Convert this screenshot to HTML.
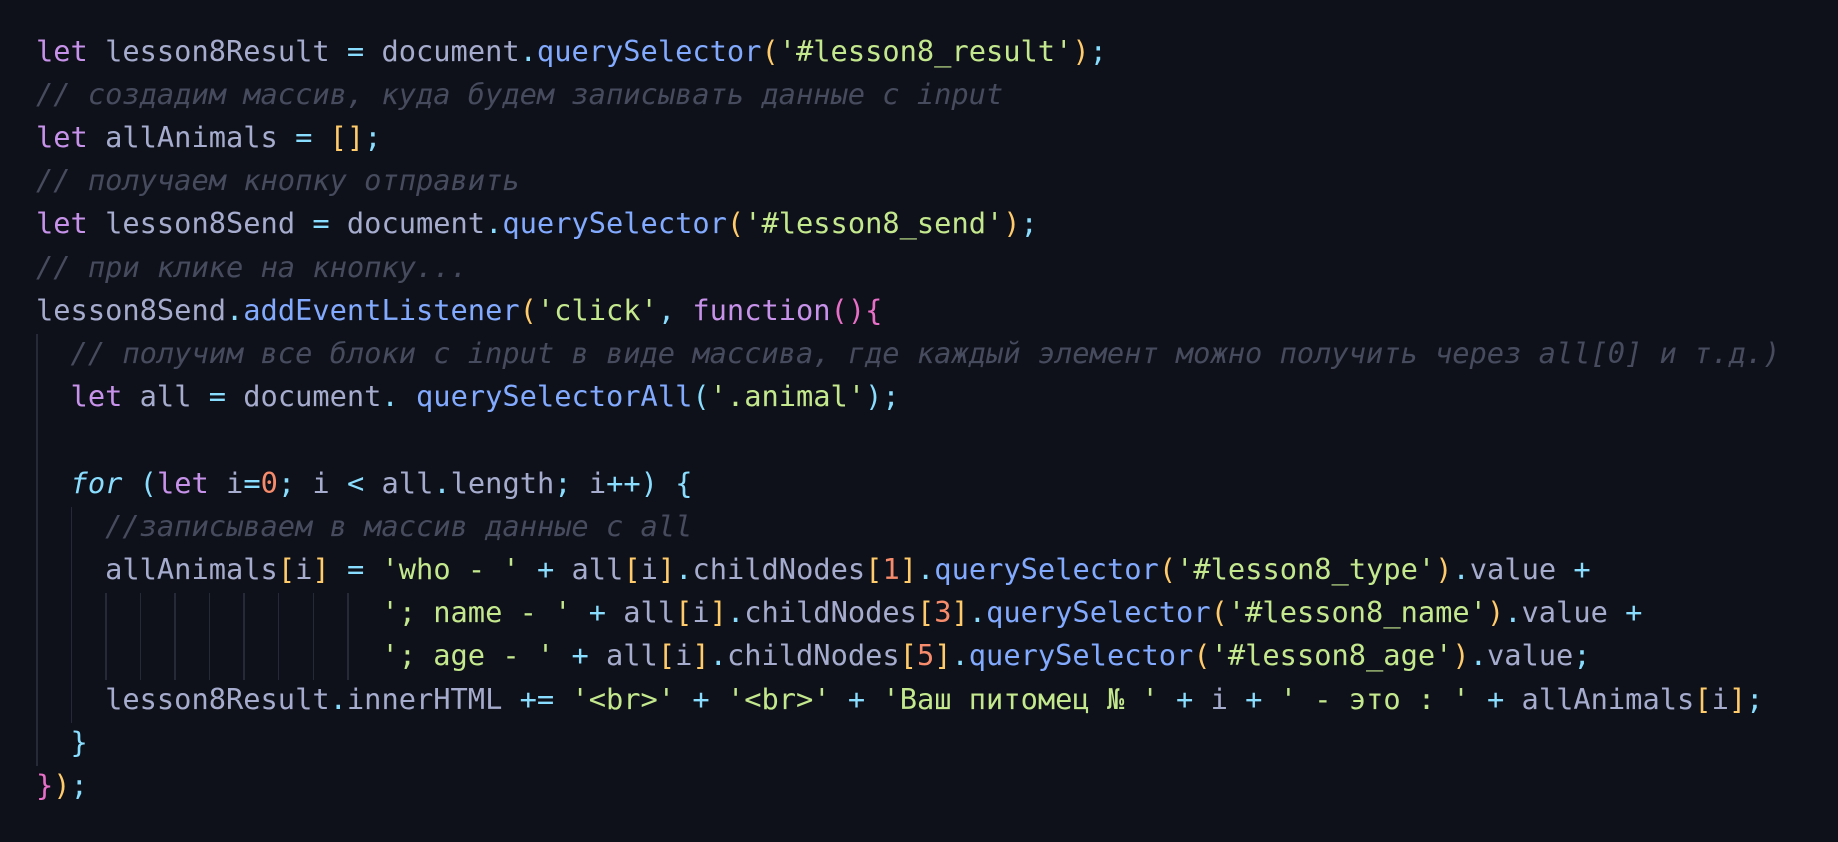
<!DOCTYPE html>
<html><head><meta charset="utf-8"><style>
html,body{margin:0;padding:0;background:#0f111a;width:1838px;height:842px;overflow:hidden}
.l{position:absolute;left:36px;margin-top:-2.2px;height:43.2px;line-height:43.2px;white-space:pre;font-family:"DejaVu Sans Mono","Liberation Mono",monospace;font-size:28.7px;color:#a6accd}
.k{color:#c792ea}.o{color:#89ddff}.m{color:#82aaff}.s{color:#c3e88d}.y{color:#ffcb6b}.n{color:#f78c6c}
.c{color:#464b5d;font-style:italic}.f{color:#89ddff;font-style:italic}.pk{color:#e86fc7}
.g{position:absolute;width:1.5px;background:#262a38}
</style></head><body>
<div class="g" style="left:36px;top:334.1px;height:432px"></div>
<div class="g" style="left:70.6px;top:507px;height:216px"></div>
<div class="g" style="left:105.1px;top:593.4px;height:86.4px"></div>
<div class="g" style="left:139.7px;top:593.4px;height:86.4px"></div>
<div class="g" style="left:174.2px;top:593.4px;height:86.4px"></div>
<div class="g" style="left:208.8px;top:593.4px;height:86.4px"></div>
<div class="g" style="left:243.4px;top:593.4px;height:86.4px"></div>
<div class="g" style="left:277.9px;top:593.4px;height:86.4px"></div>
<div class="g" style="left:312.5px;top:593.4px;height:86.4px"></div>
<div class="g" style="left:347px;top:593.4px;height:86.4px"></div>

<div class="l" style="top:31.7px"><span class="k">let</span> lesson8Result <span class="o">=</span> document<span class="o">.</span><span class="m">querySelector</span><span class="y">(</span><span class="s">'#lesson8_result'</span><span class="y">)</span><span class="o">;</span></div>
<div class="l" style="top:74.9px"><span class="c">// создадим массив, куда будем записывать данные с input</span></div>
<div class="l" style="top:118.1px"><span class="k">let</span> allAnimals <span class="o">=</span> <span class="y">[]</span><span class="o">;</span></div>
<div class="l" style="top:161.3px"><span class="c">// получаем кнопку отправить</span></div>
<div class="l" style="top:204.5px"><span class="k">let</span> lesson8Send <span class="o">=</span> document<span class="o">.</span><span class="m">querySelector</span><span class="y">(</span><span class="s">'#lesson8_send'</span><span class="y">)</span><span class="o">;</span></div>
<div class="l" style="top:247.7px"><span class="c">// при клике на кнопку...</span></div>
<div class="l" style="top:290.9px">lesson8Send<span class="o">.</span><span class="m">addEventListener</span><span class="y">(</span><span class="s">'click'</span><span class="o">,</span> <span class="k">function</span><span class="pk">(){</span></div>
<div class="l" style="top:334.1px">  <span class="c">// получим все блоки с input в виде массива, где каждый элемент можно получить через all[0] и т.д.)</span></div>
<div class="l" style="top:377.3px">  <span class="k">let</span> all <span class="o">=</span> document<span class="o">.</span> <span class="m">querySelectorAll</span><span class="o">(</span><span class="s">'.animal'</span><span class="o">);</span></div>
<div class="l" style="top:463.7px">  <span class="f">for</span> <span class="o">(</span><span class="k">let</span> i<span class="o">=</span><span class="n">0</span><span class="o">;</span> i <span class="o">&lt;</span> all<span class="o">.</span>length<span class="o">;</span> i<span class="o">++)</span> <span class="o">{</span></div>
<div class="l" style="top:506.9px">    <span class="c">//записываем в массив данные с all</span></div>
<div class="l" style="top:550.1px">    allAnimals<span class="y">[</span>i<span class="y">]</span> <span class="o">=</span> <span class="s">'who - '</span> <span class="o">+</span> all<span class="y">[</span>i<span class="y">]</span><span class="o">.</span>childNodes<span class="y">[</span><span class="n">1</span><span class="y">]</span><span class="o">.</span><span class="m">querySelector</span><span class="y">(</span><span class="s">'#lesson8_type'</span><span class="y">)</span><span class="o">.</span>value <span class="o">+</span></div>
<div class="l" style="top:593.3px">                    <span class="s">'; name - '</span> <span class="o">+</span> all<span class="y">[</span>i<span class="y">]</span><span class="o">.</span>childNodes<span class="y">[</span><span class="n">3</span><span class="y">]</span><span class="o">.</span><span class="m">querySelector</span><span class="y">(</span><span class="s">'#lesson8_name'</span><span class="y">)</span><span class="o">.</span>value <span class="o">+</span></div>
<div class="l" style="top:636.5px">                    <span class="s">'; age - '</span> <span class="o">+</span> all<span class="y">[</span>i<span class="y">]</span><span class="o">.</span>childNodes<span class="y">[</span><span class="n">5</span><span class="y">]</span><span class="o">.</span><span class="m">querySelector</span><span class="y">(</span><span class="s">'#lesson8_age'</span><span class="y">)</span><span class="o">.</span>value<span class="o">;</span></div>
<div class="l" style="top:679.7px">    lesson8Result<span class="o">.</span>innerHTML <span class="o">+=</span> <span class="s">'&lt;br&gt;'</span> <span class="o">+</span> <span class="s">'&lt;br&gt;'</span> <span class="o">+</span> <span class="s">'Ваш питомец № '</span> <span class="o">+</span> i <span class="o">+</span> <span class="s">' - это : '</span> <span class="o">+</span> allAnimals<span class="y">[</span>i<span class="y">]</span><span class="o">;</span></div>
<div class="l" style="top:722.9px">  <span class="o">}</span></div>
<div class="l" style="top:766.1px"><span class="pk">}</span><span class="y">)</span><span class="o">;</span></div>
</body></html>
